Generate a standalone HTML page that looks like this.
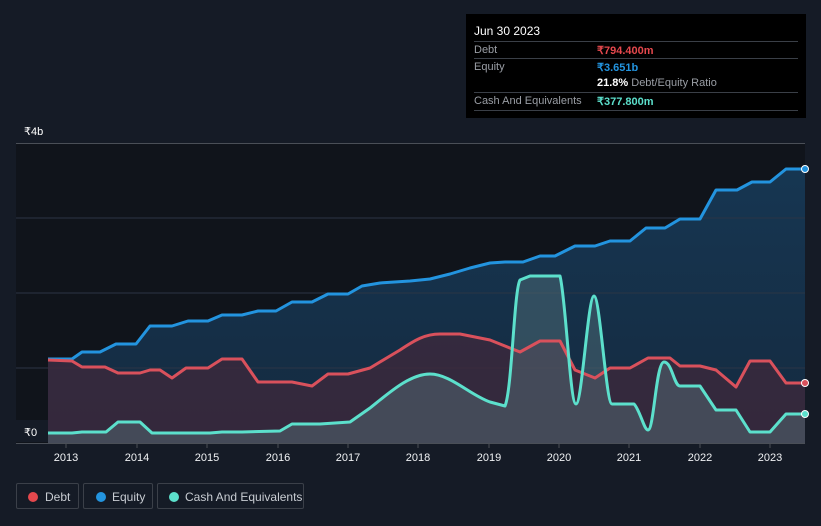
<!DOCTYPE html>
<html><head><meta charset="utf-8"><style>
html,body{margin:0;padding:0;background:#151b26;width:821px;height:526px;overflow:hidden;font-family:"Liberation Sans",sans-serif;}
.tip{position:absolute;left:466px;top:14px;width:340px;height:104px;background:#000;color:#fff;font-size:11px;}
.tip .h{position:absolute;left:8px;top:10px;font-size:12px;}
.row{position:absolute;left:8px;width:324px;height:17px;border-top:1px solid #3a3f47;}
.row span{position:absolute;top:2px;}
.l{left:0;color:#9a9ea5}.v{left:123px;font-weight:bold}
.leg{position:absolute;top:483px;height:26px;border:1px solid #3b4049;border-radius:2px;color:#c8ccd2;font-size:12px;line-height:26px;box-sizing:border-box;}
.leg i{position:absolute;top:8px;width:10px;height:10px;border-radius:50%;}
</style></head><body>
<svg width="821" height="526" style="position:absolute;left:0;top:0">
<defs>
<linearGradient id="eq" x1="0" y1="0" x2="0" y2="1"><stop offset="0" stop-color="#173a58" stop-opacity=".9"/><stop offset="1" stop-color="#163450" stop-opacity=".7"/></linearGradient>
</defs>
<rect x="16" y="143" width="789" height="300" fill="#10141b"/>
<path d="M48,359 L72,359 L82,352 L100,352 L116,344 L136,344 L150,326 L172,326 L188,321 L208,321 L222,315 L242,315 L258,311 L276,311 L292,302 L312,302 L328,294 L348,294 L362,286 L380,283 L410,281 L430,279 L450,274 L470,268 L490,263 L505,262 L523,262 L540,256 L555,256 L575,246 L595,246 L610,241 L630,241 L646,228 L665,228 L680,219 L700,219 L716,190 L737,190 L752,182 L770,182 L786,169 L805,169 L805,443 L48,443Z" fill="url(#eq)"/>
<g stroke="#2b3545" stroke-width="1"><line x1="16" y1="218" x2="805" y2="218"/><line x1="16" y1="293" x2="805" y2="293"/><line x1="16" y1="368" x2="805" y2="368"/></g>
<line x1="16" y1="143.5" x2="805" y2="143.5" stroke="#4a4f57"/>
<path d="M48,360 L72,361 L82,367 L105,367 L118,373 L140,373 L150,370 L160,370 L172,378 L186,368 L208,368 L222,359 L242,359 L258,382 L292,382 L312,386 L328,374 L348,374 L370,368 L400,350 C415,340 425,334 440,334 L460,334 L490,340 L520,352 L540,341 L560,341 L575,370 L595,378 L610,368 L630,368 L648,358 L670,358 L680,366 L700,366 L716,370 L736,387 L750,361 L770,361 L786,383 L805,383 L805,443 L48,443Z" fill="#42283a" fill-opacity=".7"/>
<path d="M48,433 L72,433 L82,432 L106,432 L118,422 L140,422 L152,433 L210,433 L222,432 L242,432 L280,431 L292,424 L320,424 L350,422 L370,408 C390,392 410,374 430,374 C450,374 470,395 490,402 L505,406 C512,390 514,290 520,280 L530,276 L560,276 C566,300 570,404 576,404 C582,404 588,296 594,296 C600,296 606,404 612,404 L634,404 C640,410 644,430 648,430 C654,430 656,362 664,362 C672,362 674,386 680,386 L700,386 L716,410 L736,410 L750,432 L770,432 L786,414 L805,414 L805,443 L48,443Z" fill="#5a7a80" fill-opacity=".42"/>
<g fill="none" stroke-width="3" stroke-linejoin="round">
<path stroke="#2394df" d="M48,359 L72,359 L82,352 L100,352 L116,344 L136,344 L150,326 L172,326 L188,321 L208,321 L222,315 L242,315 L258,311 L276,311 L292,302 L312,302 L328,294 L348,294 L362,286 L380,283 L410,281 L430,279 L450,274 L470,268 L490,263 L505,262 L523,262 L540,256 L555,256 L575,246 L595,246 L610,241 L630,241 L646,228 L665,228 L680,219 L700,219 L716,190 L737,190 L752,182 L770,182 L786,169 L805,169"/>
<path stroke="#d9515c" d="M48,360 L72,361 L82,367 L105,367 L118,373 L140,373 L150,370 L160,370 L172,378 L186,368 L208,368 L222,359 L242,359 L258,382 L292,382 L312,386 L328,374 L348,374 L370,368 L400,350 C415,340 425,334 440,334 L460,334 L490,340 L520,352 L540,341 L560,341 L575,370 L595,378 L610,368 L630,368 L648,358 L670,358 L680,366 L700,366 L716,370 L736,387 L750,361 L770,361 L786,383 L805,383"/>
<path stroke="#5ce0cc" d="M48,433 L72,433 L82,432 L106,432 L118,422 L140,422 L152,433 L210,433 L222,432 L242,432 L280,431 L292,424 L320,424 L350,422 L370,408 C390,392 410,374 430,374 C450,374 470,395 490,402 L505,406 C512,390 514,290 520,280 L530,276 L560,276 C566,300 570,404 576,404 C582,404 588,296 594,296 C600,296 606,404 612,404 L634,404 C640,410 644,430 648,430 C654,430 656,362 664,362 C672,362 674,386 680,386 L700,386 L716,410 L736,410 L750,432 L770,432 L786,414 L805,414"/>
</g>
<circle cx="805" cy="169" r="3.5" fill="#2394df" stroke="#fff" stroke-width="1"/>
<circle cx="805" cy="383" r="3.5" fill="#d9515c" stroke="#fff" stroke-width="1"/>
<circle cx="805" cy="414" r="3.5" fill="#5ce0cc" stroke="#fff" stroke-width="1"/>
<line x1="16" y1="443.5" x2="805" y2="443.5" stroke="#4a4f57"/>
<rect x="16" y="420" width="32" height="22" fill="#151b26"/>
<g fill="#fff" font-size="11" font-family="Liberation Sans,sans-serif">
<text x="24" y="135">₹4b</text><text x="24" y="436">₹0</text>
</g>
<g stroke="#4a4f57"><line x1="66" y1="443" x2="66" y2="448"/><line x1="137" y1="443" x2="137" y2="448"/><line x1="207" y1="443" x2="207" y2="448"/><line x1="278" y1="443" x2="278" y2="448"/><line x1="348" y1="443" x2="348" y2="448"/><line x1="418" y1="443" x2="418" y2="448"/><line x1="489" y1="443" x2="489" y2="448"/><line x1="559" y1="443" x2="559" y2="448"/><line x1="629" y1="443" x2="629" y2="448"/><line x1="700" y1="443" x2="700" y2="448"/><line x1="770" y1="443" x2="770" y2="448"/></g>
<g fill="#f0f2f4" font-size="11" text-anchor="middle" font-family="Liberation Sans,sans-serif">
<text x="66" y="461">2013</text><text x="137" y="461">2014</text><text x="207" y="461">2015</text><text x="278" y="461">2016</text><text x="348" y="461">2017</text><text x="418" y="461">2018</text><text x="489" y="461">2019</text><text x="559" y="461">2020</text><text x="629" y="461">2021</text><text x="700" y="461">2022</text><text x="770" y="461">2023</text>
</g>
</svg>
<div class="tip">
<div class="h">Jun 30 2023</div>
<div class="row" style="top:27px"><span class="l">Debt</span><span class="v" style="color:#e5484d">₹794.400m</span></div>
<div class="row" style="top:44px"><span class="l">Equity</span><span class="v" style="color:#2394df">₹3.651b</span></div>
<div class="row" style="top:61px;border-top:none"><span class="v" style="color:#fff">21.8% <b style="font-weight:normal;color:#9a9ea5">Debt/Equity Ratio</b></span></div>
<div class="row" style="top:78px"><span class="l">Cash And Equivalents</span><span class="v" style="color:#5ce0cc">₹377.800m</span></div>
<div class="row" style="top:96px;height:0"></div>
</div>
<div class="leg" style="left:16px;width:63px"><i style="left:11px;background:#e5484d"></i><span style="position:absolute;left:28px">Debt</span></div>
<div class="leg" style="left:83px;width:70px"><i style="left:12px;background:#2394df"></i><span style="position:absolute;left:28px">Equity</span></div>
<div class="leg" style="left:157px;width:147px"><i style="left:11px;background:#5ce0cc"></i><span style="position:absolute;left:27px">Cash And Equivalents</span></div>
</body></html>
